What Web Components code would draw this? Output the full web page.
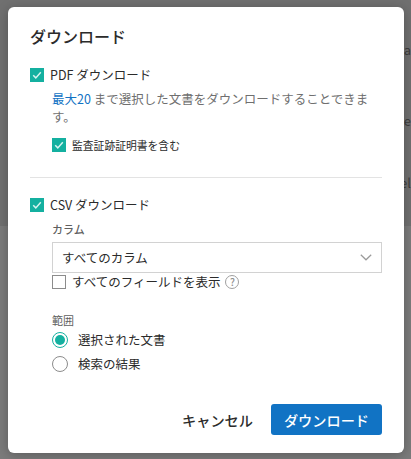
<!DOCTYPE html>
<html lang="ja">
<head>
<meta charset="utf-8">
<title>ダウンロード</title>
<style>
  html, body { margin: 0; height: 100%; overflow: hidden; }
  body { font-family: "Noto Sans CJK JP", "Noto Sans", sans-serif; color: #222; }
</style>
</head>
<body>
<page-backdrop>
  <download-dialog>
    <h-title slot="title">ダウンロード</h-title>

    <check-row checked>PDF ダウンロード</check-row>
    <div class="note" style="margin:7px 0 0 22px;font-size:12.5px;line-height:18px;color:#6f6f6f"><span style="color:#1173c4">最大20</span> まで選択した文書をダウンロードすることできます。</div>
    <check-row checked small style="margin:11px 0 0 22px">監査証跡証明書を含む</check-row>

    <div style="border-top:1px solid #e3e3e3;margin:24px 0 19px"></div>

    <check-row checked>CSV ダウンロード</check-row>
    <div style="margin:9px 0 0 22px">
      <field-label bold>カラム</field-label>
      <select-box style="margin-top:6px">すべてのカラム</select-box>
      <check-row style="margin-top:1px">すべてのフィールドを表示<help-icon></help-icon></check-row>
      <field-label style="margin-top:23px">範囲</field-label>
      <radio-row checked style="margin-top:5px">選択された文書</radio-row>
      <radio-row style="margin-top:8px">検索の結果</radio-row>
    </div>

    <text-button slot="actions">キャンセル</text-button>
    <primary-button slot="actions">ダウンロード</primary-button>
  </download-dialog>
</page-backdrop>

<script>
class PageBackdrop extends HTMLElement {
  constructor() {
    super();
    this.attachShadow({mode: 'open'}).innerHTML = `
      <style>
        :host { display: block; position: relative; width: 411px; height: 459px; overflow: hidden; background: #7b7b7b; }
        .top { position: absolute; left: 0; right: 0; top: 0; height: 226px; background: #707070; }
        .bit { position: absolute; right: 0; font-size: 13px; line-height: 18px; color: #3c3c3c; }
        .wrap { position: relative; display: flex; height: 100%; padding: 7px 7px 6px 8px; box-sizing: border-box; }
      </style>
      <div class="top"></div>
      <span class="bit" style="top:41px">a</span>
      <span class="bit" style="top:112px">ce</span>
      <span class="bit" style="top:174px">el</span>
      <div class="wrap"><slot></slot></div>
    `;
  }
}
customElements.define('page-backdrop', PageBackdrop);

class DownloadDialog extends HTMLElement {
  constructor() {
    super();
    this.attachShadow({mode: 'open'}).innerHTML = `
      <style>
        :host { display: flex; flex-direction: column; flex: 1; box-sizing: border-box; padding: 17px 22px 18px; background: #fff; border-radius: 6px; box-shadow: 0 2px 12px rgba(0,0,0,.25); }
        .body { flex: 1; margin-top: 19px; }
        .actions { display: flex; justify-content: flex-end; align-items: center; gap: 18px; }
      </style>
      <slot name="title"></slot>
      <div class="body"><slot></slot></div>
      <div class="actions"><slot name="actions"></slot></div>
    `;
  }
}
customElements.define('download-dialog', DownloadDialog);

class HTitle extends HTMLElement {
  constructor() {
    super();
    this.attachShadow({mode: 'open'}).innerHTML = `
      <style>:host { display: block; font-size: 16px; line-height: 24px; font-weight: 500; color: #2b2b2b; }</style>
      <slot></slot>`;
  }
}
customElements.define('h-title', HTitle);

class CheckRow extends HTMLElement {
  constructor() {
    super();
    const on = this.hasAttribute('checked');
    const small = this.hasAttribute('small');
    this.attachShadow({mode: 'open'}).innerHTML = `
      <style>
        :host { display: flex; align-items: center; gap: 6px; font-size: ${small ? 10.8 : 12.5}px; line-height: 16px; color: #2b2b2b; }
        .box { flex: none; width: 14px; height: 14px; box-sizing: border-box; ${on ? 'background:#14b0a0;' : 'border:1px solid #8c8c8c;background:#fff;'} }
        svg { display: block; }
        .label { display: flex; align-items: center; gap: 5px; }
      </style>
      <span class="box">${on ? '<svg width="14" height="14" viewBox="0 0 14 14"><path d="M3.2 7.3l2.6 2.6 5-5.6" fill="none" stroke="#d8f3f0" stroke-width="1.5"/></svg>' : ''}</span>
      <span class="label"><slot></slot></span>`;
  }
}
customElements.define('check-row', CheckRow);

class FieldLabel extends HTMLElement {
  constructor() {
    super();
    this.attachShadow({mode: 'open'}).innerHTML = `
      <style>:host { display: block; font-size: 11px; line-height: 14px; color: #5f5f5f; font-weight: ${this.hasAttribute('bold') ? 500 : 400}; }</style>
      <slot></slot>`;
  }
}
customElements.define('field-label', FieldLabel);

class SelectBox extends HTMLElement {
  constructor() {
    super();
    this.attachShadow({mode: 'open'}).innerHTML = `
      <style>
        :host { display: flex; align-items: center; justify-content: space-between; box-sizing: border-box; height: 31px; padding: 0 9px 1px 9px; border: 1px solid #d2d2d2; font-size: 12.5px; color: #2b2b2b; }
        svg { display: block; }
      </style>
      <slot></slot>
      <svg width="12" height="7" viewBox="0 0 12 7"><path d="M.8.8L6 5.8 11.2.8" fill="none" stroke="#9a9a9a" stroke-width="1.2"/></svg>`;
  }
}
customElements.define('select-box', SelectBox);

class HelpIcon extends HTMLElement {
  constructor() {
    super();
    this.attachShadow({mode: 'open'}).innerHTML = `
      <style>
        :host { display: inline-flex; align-items: center; justify-content: center; box-sizing: border-box; width: 14px; height: 14px; border: 1px solid #a0a0a0; border-radius: 50%; font-size: 10px; font-weight: 500; line-height: 1; color: #8f8f8f; }
      </style>?`;
  }
}
customElements.define('help-icon', HelpIcon);

class RadioRow extends HTMLElement {
  constructor() {
    super();
    const on = this.hasAttribute('checked');
    this.attachShadow({mode: 'open'}).innerHTML = `
      <style>
        :host { display: flex; align-items: center; gap: 10px; font-size: 12.5px; line-height: 16px; color: #2b2b2b; }
        .dot { flex: none; display: flex; align-items: center; justify-content: center; box-sizing: border-box; width: 16px; height: 16px; border-radius: 50%; border: 1px solid ${on ? '#14b0a0' : '#8c8c8c'}; }
        .dot i { width: 10px; height: 10px; border-radius: 50%; background: #14b0a0; }
      </style>
      <span class="dot">${on ? '<i></i>' : ''}</span>
      <slot></slot>`;
  }
}
customElements.define('radio-row', RadioRow);

class TextButton extends HTMLElement {
  constructor() {
    super();
    this.attachShadow({mode: 'open'}).innerHTML = `
      <style>:host { display: block; font-size: 14.2px; font-weight: 500; color: #2b2b2b; }</style>
      <slot></slot>`;
  }
}
customElements.define('text-button', TextButton);

class PrimaryButton extends HTMLElement {
  constructor() {
    super();
    this.attachShadow({mode: 'open'}).innerHTML = `
      <style>:host { display: flex; align-items: center; justify-content: center; box-sizing: border-box; width: 111px; height: 31px; border-radius: 3px; background: #1173c4; color: #fff; font-size: 14.2px; font-weight: 500; }</style>
      <slot></slot>`;
  }
}
customElements.define('primary-button', PrimaryButton);
</script>
</body>
</html>
